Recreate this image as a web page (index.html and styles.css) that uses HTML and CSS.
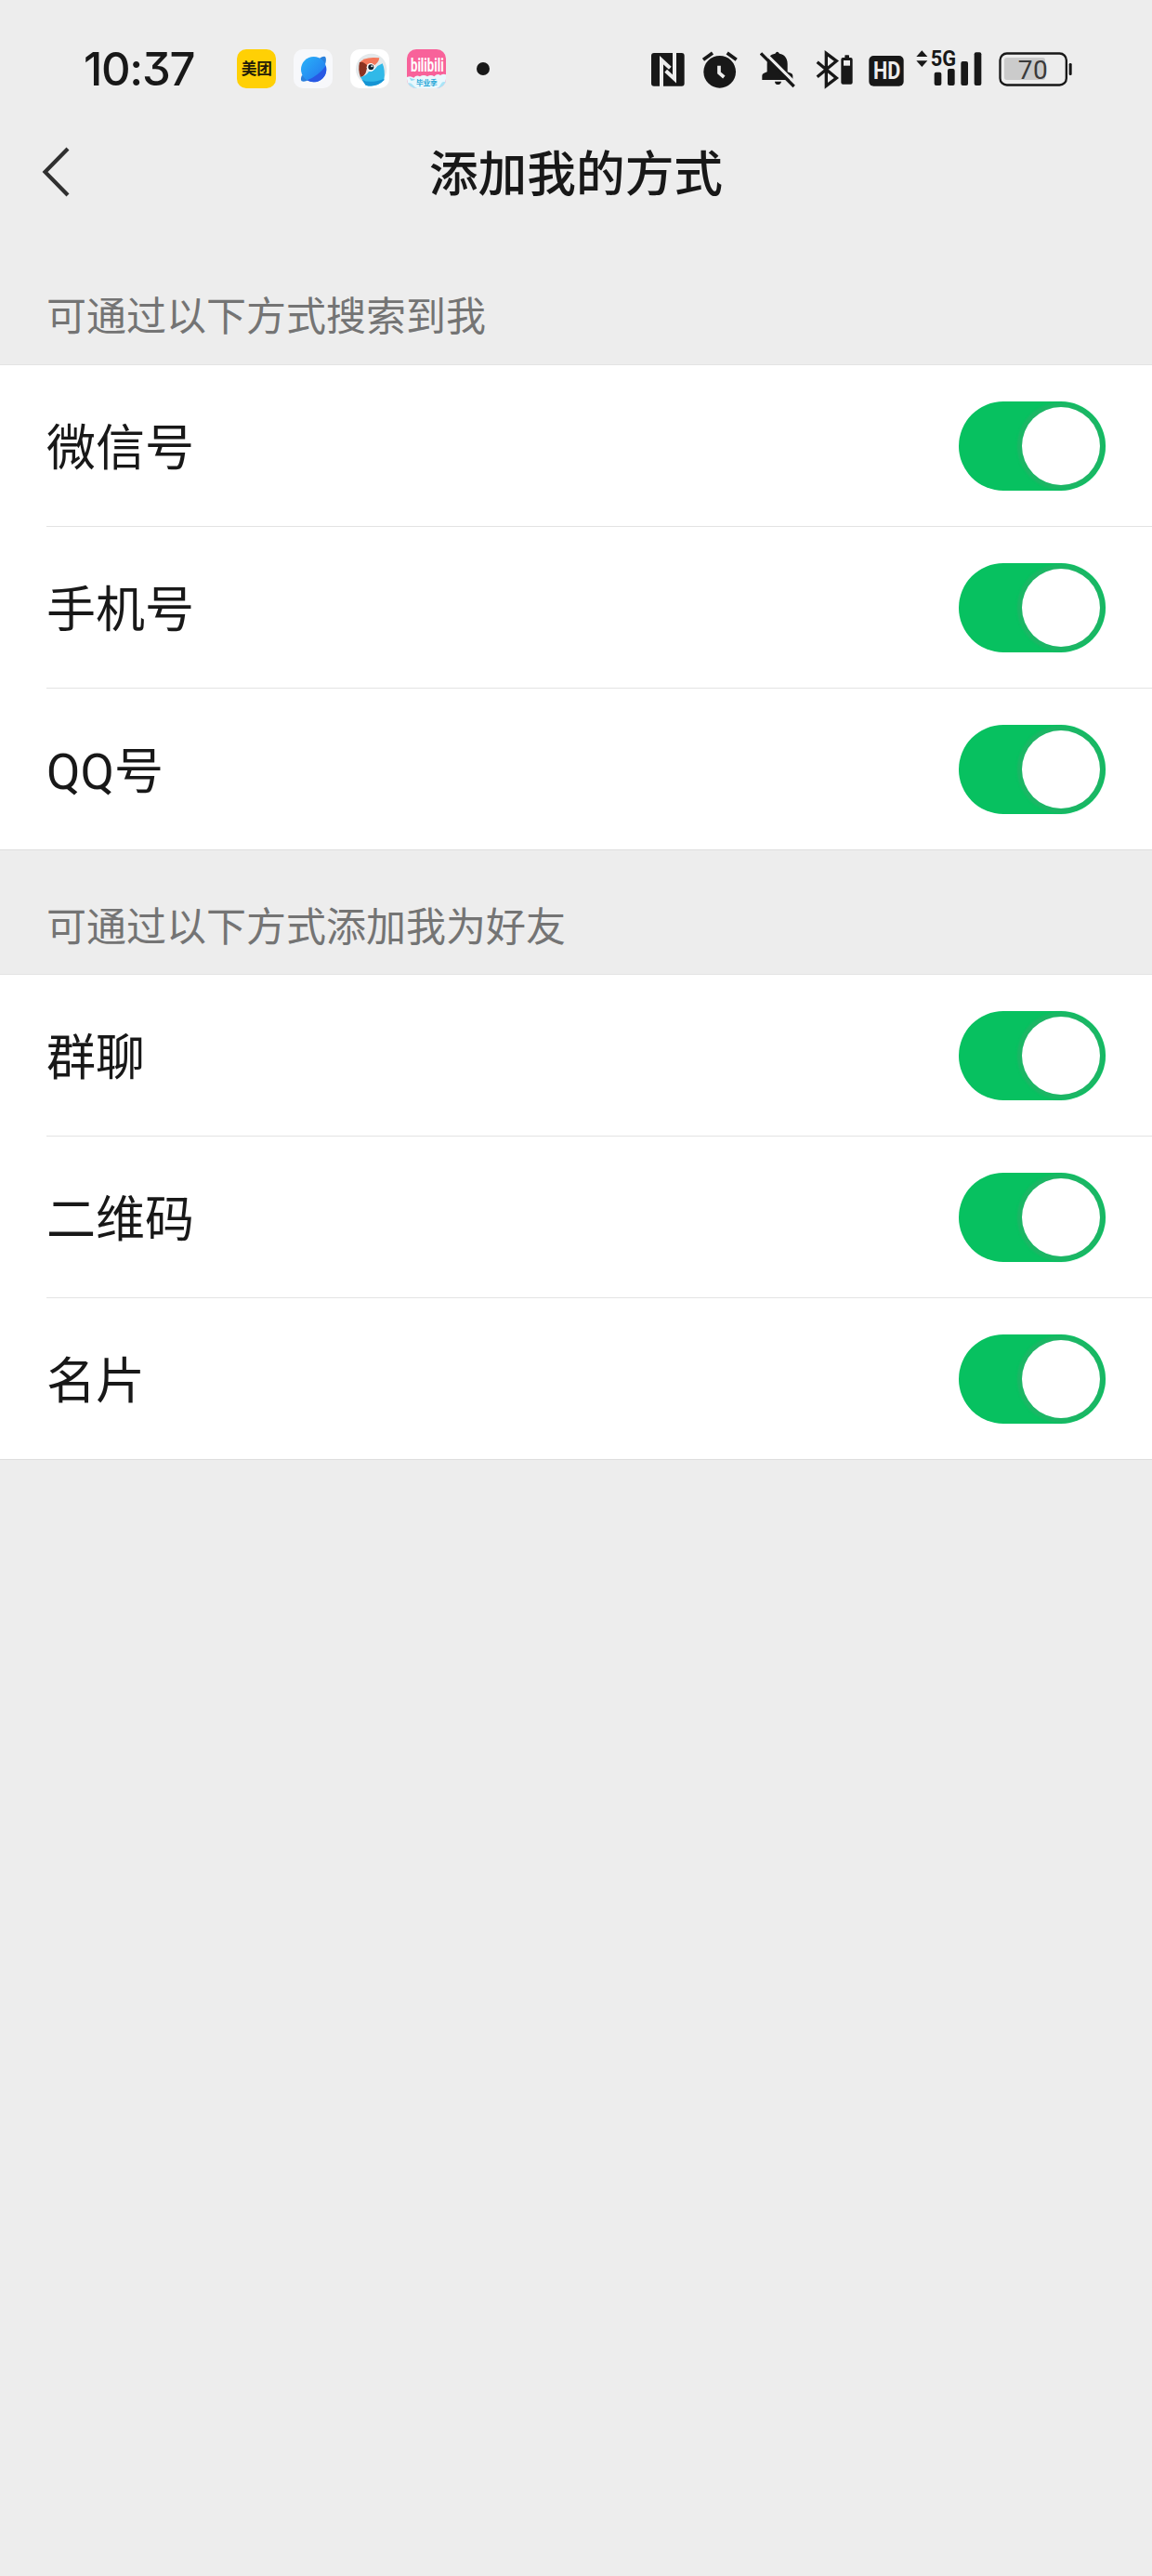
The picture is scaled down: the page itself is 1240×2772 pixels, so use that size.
FILE: index.html
```html
<!DOCTYPE html>
<html lang="zh-CN">
<head>
<meta charset="utf-8">
<title>添加我的方式</title>
<link rel="stylesheet" href="styles.css">
</head>
<body>
<div class="status-bar">
  <span class="clock">10:37</span>
  <div class="apps">
    <svg width="42" height="42" viewBox="0 0 126 126">
      <rect width="126" height="126" rx="30" fill="#ffd005"/>
      <text class="cjk-bold" x="14" y="82" font-size="50" textLength="100" fill="#231c08">美团</text>
    </svg>
    <svg width="42" height="42" viewBox="0 0 126 126">
      <defs>
        <linearGradient id="planet" x1="0" y1="0" x2="1" y2="1"><stop offset="0" stop-color="#29b3f8"/><stop offset="1" stop-color="#2472ee"/></linearGradient>
      </defs>
      <rect width="126" height="126" rx="30" fill="#f7f8fb"/>
      <path d="M84 29Q94 22 102 24Q107 30 103 46L96 60ZM27 84Q21 97 26 103Q34 107 48 100L54 90Z" fill="#2a80dc"/>
      <circle cx="65" cy="65" r="41" fill="url(#planet)"/>
      <path d="M104 54C112 80 92 107 65 106C57 106 50 104 44 100Q80 86 104 54Z" fill="#2858e4"/>
    </svg>
    <svg width="42" height="42" viewBox="0 0 126 126">
      <rect width="126" height="126" rx="30" fill="#fff"/>
      <circle cx="68" cy="64" r="50" fill="#e4e9eb"/>
      <path d="M30 45Q42 22 94 28Q92 42 78 52L42 60Z" fill="#f4785a"/>
      <path d="M30 42Q44 38 56 55L50 76Q44 88 33 90Q24 66 30 42Z" fill="#8c3320"/>
      <path d="M60 72Q76 72 88 54L104 46Q114 68 109 100Q82 126 50 116L33 90Q52 86 60 72Z" fill="#31b9e8"/>
      <path d="M38 98Q62 112 109 96L109 100Q82 126 50 116Z" fill="#1594d4"/>
      <circle cx="66" cy="58" r="13" fill="#fff"/>
      <circle cx="67" cy="58" r="9" fill="#14242e"/>
      <circle cx="70" cy="55" r="3" fill="#fff"/>
    </svg>
    <svg width="42" height="42" viewBox="0 0 126 126">
      <defs><clipPath id="tile"><rect width="126" height="126" rx="30"/></clipPath></defs>
      <g clip-path="url(#tile)">
        <rect width="126" height="126" fill="#f8629a"/>
        <text class="roboto-bold" x="12" y="73" font-size="58" textLength="107" lengthAdjust="spacingAndGlyphs" fill="#fff">bilibili</text>
        <path d="M0 90Q12 84 22 92Q30 82 42 88Q54 80 66 88Q78 80 88 88Q98 76 108 84Q118 78 126 82V126H0Z" fill="#eaf8fd"/>
        <path d="M0 112Q10 104 18 114T34 126H0ZM126 106Q114 102 110 112T98 126H126Z" fill="#a9e4f6"/>
        <path d="M8 92L28 98L14 102Z" fill="#8edcf2"/>
        <text class="cjk-bold" x="30" y="117" font-size="23" textLength="68" fill="#2ba9d8">毕业季</text>
      </g>
    </svg>
  </div>
  <span class="more-dot"></span>
  <div class="system">
    <svg class="nfc" width="36" height="44" viewBox="63 66 108 132">
      <rect x="63" y="81" width="107" height="107" rx="9"/>
      <path class="cut" d="M96 190V104L124 130M138 79V165L110 139" stroke-width="12"/>
    </svg>
    <svg class="alarm" width="38" height="44" viewBox="229 66 114 132">
      <circle cx="285" cy="142" r="52"/>
      <path class="line" d="M232 103L262 81M309 81L339 103" stroke-width="11"/>
      <path class="cut" d="M283 122V145L299 159" stroke-width="11"/>
    </svg>
    <svg class="bell" width="38" height="44" viewBox="413 66 114 132">
      <path d="M420 168V154Q420 148 426 146L436 142V116C436 96 447 85 462 83Q469 72 476 83C493 86 502 98 502 116V142L513 146Q519 148 519 154V168Z"/>
      <path d="M461 173H482Q480 183 471 183T461 173Z"/>
      <path class="cut" d="M421 73L533 185" stroke-width="10"/>
      <path class="line" d="M416 82L523 189" stroke-width="10"/>
    </svg>
    <svg class="bluetooth" width="40" height="44" viewBox="593 66 120 132">
      <path class="line" d="M598 110L660 162L627 187V82L660 107L598 158" stroke-width="10"/>
      <rect x="675" y="96" width="37" height="86" rx="6"/>
      <rect x="687" y="88" width="14" height="9" rx="2"/>
      <rect x="683" y="105" width="21" height="17" fill="#ededed"/>
    </svg>
    <svg class="hd" width="38" height="44" viewBox="45 66 114 132">
      <rect x="46" y="90" width="112" height="98" rx="15"/>
      <text class="roboto-bold" x="60" y="166" font-size="75" textLength="88" lengthAdjust="spacingAndGlyphs" fill="#ededed">HD</text>
    </svg>
    <svg class="signal" width="71" height="54" viewBox="199 51 213 162">
      <path d="M218 73L236 93H200ZM200 106H236L218 126Z"/>
      <text class="roboto-bold" x="246" y="124" font-size="72" textLength="82" lengthAdjust="spacingAndGlyphs">5G</text>
      <rect x="258" y="143" width="23" height="43" rx="6"/>
      <rect x="301" y="132" width="23" height="54" rx="6"/>
      <rect x="344" y="108" width="23" height="78" rx="6"/>
      <rect x="387" y="79" width="23" height="107" rx="6"/>
    </svg>
    <svg class="battery" width="79" height="44" viewBox="465 66 237 132">
      <rect x="483" y="96" width="132" height="72" rx="8" fill="#cbcbcb"/>
      <rect x="469.500" y="82.500" width="214" height="102" rx="22" fill="none" stroke="#181818" stroke-width="7"/>
      <rect x="692" y="114" width="9" height="39" rx="4"/>
      <text class="roboto" x="527" y="165" font-size="84" textLength="96" fill="#3a3a3a">70</text>
    </svg>
  </div>
</div>

<header class="nav">
  <svg class="back" width="32" height="56" viewBox="0 0 32 56"><path d="M29 3L4.500 28L29 53" fill="none" stroke="#303030" stroke-width="4.200"/></svg>
  <h1>添加我的方式</h1>
</header>

<main>
  <h2>可通过以下方式搜索到我</h2>
  <ul>
    <li><span>微信号</span><i class="switch"></i></li>
    <li><span>手机号</span><i class="switch"></i></li>
    <li><span><b>QQ</b>号</span><i class="switch"></i></li>
  </ul>
  <h2>可通过以下方式添加我为好友</h2>
  <ul>
    <li><span>群聊</span><i class="switch"></i></li>
    <li><span>二维码</span><i class="switch"></i></li>
    <li><span>名片</span><i class="switch"></i></li>
  </ul>
</main>
</body>
</html>
```

FILE: styles.css
```css
* { box-sizing: border-box; margin: 0; padding: 0; }

body {
  width: 1240px;
  min-height: 2772px;
  background: #ededed;
  color: #181818;
  font-family: "Noto Sans CJK SC", sans-serif;
}

svg { display: block; flex: none; fill: #181818; }

.status-bar {
  display: flex;
  align-items: center;
  height: 148px;
  padding-left: 90px;
}
.clock {
  width: 165px;
  padding-top: 2px;
  font: 450 49px/60px Inter, sans-serif;
  font-feature-settings: "cv09";
  letter-spacing: -1.3px;
}
.apps { display: flex; gap: 19px; }
.more-dot { width: 14px; height: 14px; margin-left: 33px; border-radius: 50%; background: #181818; }
.system { display: flex; align-items: center; margin-left: 174px; }
.alarm { margin-left: 19px; }
.bell { margin-left: 24px; }
.bluetooth { margin-left: 22px; }
.hd { margin-left: 17px; }
.signal { margin-left: 13px; }
.battery { margin-left: 18px; }

.line { fill: none; stroke: #181818; }
.cut { fill: none; stroke: #ededed; }
.cjk-bold { font-family: "Noto Sans CJK SC", sans-serif; font-weight: 700; }
.roboto { font-family: Roboto, sans-serif; }
.roboto-bold { font-family: Roboto, sans-serif; font-weight: 700; }

.nav {
  display: grid;
  grid-template-columns: 120px 1fr 120px;
  align-items: center;
  height: 74px;
}
.back { margin-left: 44px; }
.nav h1 { padding-bottom: 3px; text-align: center; font-size: 52.7px; line-height: 71px; font-weight: 500; }

main h2 {
  height: 133px;
  padding: 51px 50px 0;
  font-size: 43px;
  line-height: 56px;
  font-weight: 400;
  color: #747474;
}
main h2:first-child { height: 170px; padding-top: 87px; }

ul { list-style: none; background: #fff; border-top: 1px solid #e3e3e3; border-bottom: 1px solid #dedede; }
li {
  display: flex;
  align-items: center;
  justify-content: space-between;
  height: 173px;
  margin-left: 50px;
  padding-right: 50px;
  font-size: 53px;
  line-height: 74px;
}
li + li { height: 174px; border-top: 1px solid #e3e3e3; }
li span { height: 74px; margin-top: -3px; }
li b { font-family: Roboto, sans-serif; font-weight: 400; line-height: 1; }

.switch {
  display: flex;
  justify-content: flex-end;
  width: 158px;
  height: 96px;
  padding: 6px;
  border-radius: 48px;
  background: #07c160;
}
.switch::before {
  content: "";
  width: 84px;
  height: 84px;
  border-radius: 50%;
  background: #fff;
  box-shadow: 0 0 2px 5px #1cb665;
}
```
